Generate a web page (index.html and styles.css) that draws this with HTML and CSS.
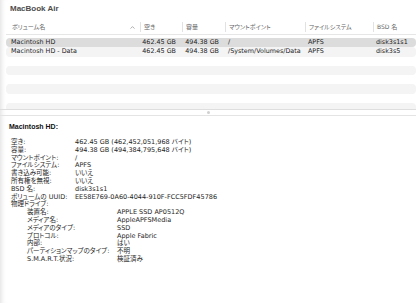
FILE: index.html
```html
<!DOCTYPE html>
<html lang="ja">
<head>
    <meta charset="UTF-8">
    <meta name="viewport" content="width=device-width, initial-scale=1.0">
    <title>ディスクユーティリティ</title>
    <link rel="stylesheet" href="styles.css">
</head>
<body>
    <div class="window">
        <div class="device-title">MacBook Air</div>
        <div class="volumes">
            <div class="vol-head">
                <div class="cell name">ボリューム名
                    <svg class="caret" width="5" height="3" viewBox="0 0 5 3"><path d="M0.5 2.6 L2.5 0.6 L4.5 2.6" fill="none" stroke="#9a9a9a" stroke-width="0.8"/></svg>
                </div>
                <div class="cell">空き</div>
                <div class="cell">容量</div>
                <div class="cell">マウントポイント</div>
                <div class="cell">ファイルシステム</div>
                <div class="cell">BSD 名</div>
            </div>
            <div class="vol-body">
                <div class="vol-row selected">
                    <div class="cell name">Macintosh HD</div>
                    <div class="cell num">462.45 GB</div>
                    <div class="cell num">494.38 GB</div>
                    <div class="cell">/</div>
                    <div class="cell">APFS</div>
                    <div class="cell">disk3s1s1</div>
                </div>
                <div class="vol-row">
                    <div class="cell name">Macintosh HD - Data</div>
                    <div class="cell num">462.45 GB</div>
                    <div class="cell num">494.38 GB</div>
                    <div class="cell">/System/Volumes/Data</div>
                    <div class="cell">APFS</div>
                    <div class="cell">disk3s5</div>
                </div>
                <div class="vol-row"></div>
                <div class="vol-row"></div>
                <div class="vol-row"></div>
                <div class="vol-row"></div>
                <div class="vol-row"></div>
                <div class="vol-row"></div>
            </div>
        </div>
        <div class="splitter"><span class="grip"></span></div>
        <div class="details">
            <h3>Macintosh HD:</h3>
            <dl class="props">
                <dt>空き:</dt><dd>462.45 GB (462,452,051,968 バイト)</dd>
                <dt>容量:</dt><dd>494.38 GB (494,384,795,648 バイト)</dd>
                <dt>マウントポイント:</dt><dd>/</dd>
                <dt>ファイルシステム:</dt><dd>APFS</dd>
                <dt>書き込み可能:</dt><dd>いいえ</dd>
                <dt>所有権を無視:</dt><dd>いいえ</dd>
                <dt>BSD 名:</dt><dd>disk3s1s1</dd>
                <dt>ボリュームの UUID:</dt><dd>EE58E769-0A60-4044-910F-FCC5FDF45786</dd>
                <dt class="full">物理ドライブ:</dt>
                <dd class="full">
                    <dl class="props sub">
                        <dt>装置名:</dt><dd>APPLE SSD AP0512Q</dd>
                        <dt>メディア名:</dt><dd>AppleAPFSMedia</dd>
                        <dt>メディアのタイプ:</dt><dd>SSD</dd>
                        <dt>プロトコル:</dt><dd>Apple Fabric</dd>
                        <dt>内部:</dt><dd>はい</dd>
                        <dt>パーティションマップのタイプ:</dt><dd>不明</dd>
                        <dt>S.M.A.R.T.状況:</dt><dd>検証済み</dd>
                    </dl>
                </dd>
            </dl>
        </div>
    </div>
</body>
</html>
```

FILE: styles.css
```css
body {
    margin: 0;
    background: #fff;
    font-family: "DejaVu Sans", "Noto Sans CJK JP", sans-serif;
    color: #222;
}
.window {
    width: 416px;
    height: 303px;
    overflow: hidden;
    display: flex;
    flex-direction: column;
    box-shadow: inset 6px 0 6px -6px rgba(0, 0, 0, 0.18);
}
.device-title {
    height: 20px;
    line-height: 17px;
    padding-left: 10px;
    font-family: "Liberation Sans", sans-serif;
    font-size: 8px;
    font-weight: bold;
    color: #4d4d4d;
}
.vol-head, .vol-row {
    display: grid;
    grid-template-columns: 134px 42px 43px 80px 68px 1fr;
    margin-left: 6px;
}
.vol-head {
    height: 14px;
    align-items: center;
    border-bottom: 1px solid #e6e6e6;
    font-size: 6px;
    color: #666;
    font-feature-settings: "palt";
}
.vol-head .cell {
    padding-left: 3px;
    border-left: 1px solid #e2e2e2;
    line-height: 10px;
    white-space: nowrap;
}
.vol-head .cell.name {
    border-left: none;
    padding-left: 6px;
    display: flex;
    align-items: center;
}
.caret {
    margin-left: auto;
    margin-right: 5px;
}
.vol-body {
    height: 71px;
    padding-top: 3px;
    overflow: hidden;
}
.vol-row {
    height: 9.25px;
    line-height: 9.25px;
    font-size: 6.4px;
    border-radius: 4px;
    color: #1e1e1e;
}
.vol-row:nth-child(even) {
    background: #f4f4f5;
}
.vol-row.selected {
    background: #dcdcdc;
}
.vol-row .cell {
    padding-left: 3px;
    white-space: nowrap;
}
.vol-row .cell.name {
    padding-left: 5px;
}
.vol-row .cell.num {
    text-align: right;
    padding: 0 6px 0 0;
}
.splitter {
    height: 5px;
    border-top: 1px solid #dedede;
    border-bottom: 1px solid #e4e4e4;
    display: flex;
    justify-content: center;
    align-items: center;
}
.grip {
    width: 3px;
    height: 3px;
    border-radius: 50%;
    background: #d0d0d0;
}
.details {
    padding: 7px 0 0 9px;
}
.details h3 {
    margin: 0 0 8px;
    font-family: "Liberation Sans", sans-serif;
    font-size: 7px;
    line-height: 8px;
    color: #111;
}
.props {
    display: grid;
    grid-template-columns: 64px 1fr;
    margin: 0 0 0 2px;
    font-size: 6.5px;
    line-height: 7.8px;
    color: #1e1e1e;
    font-feature-settings: "palt";
}
.props dt, .props dd {
    margin: 0;
    white-space: nowrap;
}
.props .full {
    grid-column: 1 / -1;
}
.props.sub {
    grid-template-columns: 90px 1fr;
    margin-left: 16px;
}
```
